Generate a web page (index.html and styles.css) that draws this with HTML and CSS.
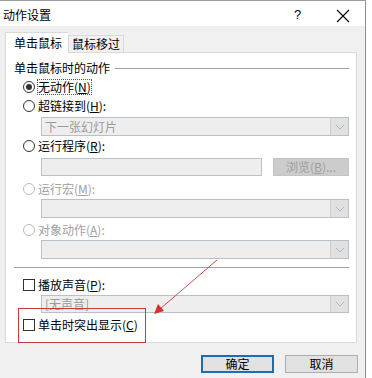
FILE: index.html
```html
<!DOCTYPE html>
<html lang="zh-CN">
<head>
    <meta charset="UTF-8">
    <title>动作设置</title>
    <link rel="stylesheet" href="styles.css">
</head>
<body>
    <div class="window">
        <div class="titlebar">
            <span class="title">动作设置</span>
            <span class="help">?</span>
            <svg class="close" width="14" height="14" viewBox="0 0 14 14">
                <path d="M1 1 L13 13 M13 1 L1 13" stroke="#000" stroke-width="1.1" fill="none"/>
            </svg>
        </div>

        <div class="tabs">
            <div class="tab active">单击鼠标</div>
            <div class="tab">鼠标移过</div>
        </div>

        <div class="panel">
            <div class="group-title">
                <span>单击鼠标时的动作</span>
                <span class="rule"></span>
            </div>

            <div class="opt mt4">
                <span class="radio checked"></span>
                <span class="focus">无动作(<u>N</u>)</span>
            </div>

            <div class="opt mt3">
                <span class="radio"></span>
                <span>超链接到(<u>H</u>):</span>
            </div>
            <div class="select mt3">
                <span class="value">下一张幻灯片</span>
                <span class="arrow"><svg width="10" height="6" viewBox="0 0 10 6"><path d="M1 1 L5 5 L9 1" stroke="#b4b4b4" fill="none"/></svg></span>
            </div>

            <div class="opt mt2">
                <span class="radio"></span>
                <span>运行程序(<u>R</u>):</span>
            </div>
            <div class="input-row mt4">
                <span class="input"></span>
                <span class="browse">浏览(<u>B</u>)...</span>
            </div>

            <div class="opt mt5 disabled">
                <span class="radio"></span>
                <span>运行宏(<u>M</u>):</span>
            </div>
            <div class="select mt2">
                <span class="value"></span>
                <span class="arrow"><svg width="10" height="6" viewBox="0 0 10 6"><path d="M1 1 L5 5 L9 1" stroke="#b4b4b4" fill="none"/></svg></span>
            </div>

            <div class="opt mt4 disabled">
                <span class="radio"></span>
                <span>对象动作(<u>A</u>):</span>
            </div>
            <div class="select mt2">
                <span class="value"></span>
                <span class="arrow"><svg width="10" height="6" viewBox="0 0 10 6"><path d="M1 1 L5 5 L9 1" stroke="#b4b4b4" fill="none"/></svg></span>
            </div>

            <div class="sep"></div>

            <div class="opt mt9">
                <span class="check"></span>
                <span>播放声音(<u>P</u>):</span>
            </div>
            <div class="select short mt2">
                <span class="value">[无声音]</span>
                <span class="arrow"><svg width="10" height="6" viewBox="0 0 10 6"><path d="M1 1 L5 5 L9 1" stroke="#b4b4b4" fill="none"/></svg></span>
            </div>

            <div class="opt mt4">
                <span class="check"></span>
                <span>单击时突出显示(<u>C</u>)</span>
            </div>
        </div>

        <div class="buttons">
            <button class="btn default">确定</button>
            <button class="btn">取消</button>
        </div>

        <!-- annotation drawn over the dialog -->
        <svg class="note" width="366" height="378" viewBox="0 0 366 378">
            <rect x="18.5" y="308.5" width="127" height="34" fill="none" stroke="#c9393d" stroke-width="1"/>
            <path d="M217 260 L160 309" stroke="#d44b4b" stroke-width="1" fill="none"/>
            <path d="M154 314 L158 304 L164 311 Z" fill="#d9302c"/>
        </svg>
    </div>
</body>
</html>
```

FILE: styles.css
```css
* {
    box-sizing: border-box;
}

body {
    margin: 0;
    background-color: #ffffff;
    font-family: "Noto Sans CJK SC", "Noto Sans", sans-serif;
    font-size: 12px;
    color: #000;
}

.window {
    position: relative;
    width: 366px;
    height: 378px;
    background-color: #f0f0f0;
    border-top: 1px solid #9c9c9c;
    border-right: 1px solid #8e8e8e;
}

.titlebar {
    height: 25px;
    background-color: #ffffff;
    display: flex;
    align-items: center;
    line-height: 14px;
}

.title {
    padding-left: 3px;
    font-size: 12px;
    margin-top: 2px;
}

.help {
    margin-left: 243px;
    font-family: "Liberation Sans", sans-serif;
    font-size: 13px;
    margin-top: 2px;
}

.close {
    margin-left: 35px;
    margin-top: 4px;
}

.tabs {
    height: 26px;
    padding-left: 5px;
    display: flex;
    align-items: flex-end;
}

.tab {
    height: 17px;
    line-height: 15px;
    padding: 0 3px;
    border: 1px solid #d9d9d9;
    border-bottom: none;
    background-color: #f0f0f0;
    margin-bottom: 0;
}

.tab.active {
    height: 21px;
    line-height: 19px;
    width: 63px;
    padding: 0 0 0 8px;
    background-color: #ffffff;
    margin-bottom: -1px;
    position: relative;
    z-index: 1;
    border-right: none;
}

.panel {
    margin-left: 5px;
    width: 352px;
    height: 291px;
    background-color: #ffffff;
    border: 1px solid #d9d9d9;
    padding: 0 7px 0 8px;
}

.group-title {
    margin-top: 8px;
    height: 14px;
    line-height: 14px;
    display: flex;
    align-items: center;
}

.group-title .rule {
    flex: 1;
    height: 1px;
    margin-left: 5px;
    background-color: #a0a0a0;
}

.opt {
    height: 16px;
    line-height: 16px;
    margin-left: 9px;
    display: flex;
    align-items: center;
}

.opt u {
    text-underline-offset: 1px;
}

.radio {
    width: 12px;
    height: 12px;
    border: 1px solid #333333;
    border-radius: 50%;
    margin-right: 3px;
    position: relative;
}

.radio.checked::after {
    content: "";
    position: absolute;
    left: 2px;
    top: 2px;
    width: 6px;
    height: 6px;
    border-radius: 50%;
    background-color: #333333;
}

.check {
    width: 12px;
    height: 12px;
    border: 1px solid #333333;
    margin-right: 3px;
}

.focus {
    outline: 1px dotted #555;
    outline-offset: -1px;
    padding: 0 1px;
    margin-left: -1px;
}

.disabled {
    color: #a0a0a0;
}

.disabled .radio {
    border-color: #bcbcbc;
}

.mt2 { margin-top: 2px; }
.mt3 { margin-top: 3px; }
.mt4 { margin-top: 4px; }
.mt5 { margin-top: 5px; }
.mt9 { margin-top: 9px; }

.select {
    margin-left: 27px;
    width: 308px;
    height: 19px;
    display: flex;
    background-color: #eeeeee;
    border: 1px solid #b9c0c8;
    color: #9a9a9a;
    line-height: 17px;
}

.select.short {
    height: 18px;
    line-height: 16px;
}

.select .value {
    flex: 1;
    padding-left: 3px;
}

.select .arrow {
    width: 18px;
    background-color: #e1e1e1;
    border-left: 1px solid #cfcfcf;
    display: flex;
    align-items: center;
    justify-content: center;
}

.input-row {
    margin-left: 27px;
    width: 308px;
    height: 18px;
    display: flex;
}

.input {
    width: 221px;
    background-color: #eeeeee;
    border: 1px solid #b9c0c8;
}

.browse {
    margin-left: 11px;
    width: 76px;
    background-color: #cccccc;
    border: 1px solid #c4c4c4;
    color: #9e9e9e;
    text-align: center;
    line-height: 16px;
}

.sep {
    margin-top: 8px;
    height: 1px;
    background-color: #a0a0a0;
}

.buttons {
    display: flex;
    justify-content: flex-end;
    gap: 11px;
    padding-right: 7px;
    margin-top: 12px;
}

.btn {
    width: 73px;
    height: 18px;
    padding: 0;
    font-family: "Noto Sans CJK SC", sans-serif;
    font-size: 12px;
    line-height: 14px;
    background-color: #e1e1e1;
    border: 1px solid #adadad;
    color: #000;
}

.btn.default {
    border: 2px solid #1a6fb4;
}

.note {
    position: absolute;
    left: 0;
    top: -1px;
    pointer-events: none;
}
```
